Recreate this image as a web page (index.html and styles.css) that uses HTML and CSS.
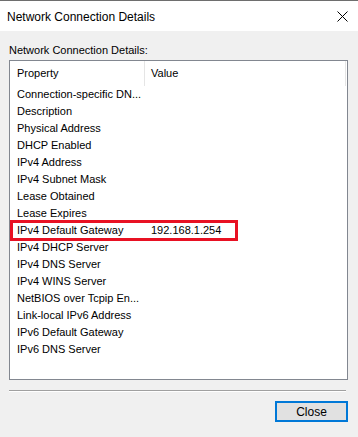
FILE: index.html
```html
<!DOCTYPE html>
<html lang="en">
<head>
    <meta charset="UTF-8">
    <title>Network Connection Details</title>
    <link rel="stylesheet" href="styles.css">
</head>
<body>
    <div class="dialog">
        <div class="titlebar">
            <span class="title">Network Connection Details</span>
            <svg class="close-x" width="11" height="11" viewBox="0 0 11 11">
                <path d="M0.5 0.5 L10.5 10.5 M10.5 0.5 L0.5 10.5" stroke="#000" stroke-width="1" fill="none"/>
            </svg>
        </div>

        <div class="content">
            <div class="label">Network Connection Details:</div>
            <div class="listbox">
                <div class="list-header">
                    <div class="col-prop">Property</div>
                    <div class="col-val">Value</div>
                </div>
                <div class="row"><span class="prop">Connection-specific DN...</span><span class="val"></span></div>
                <div class="row"><span class="prop">Description</span><span class="val"></span></div>
                <div class="row"><span class="prop">Physical Address</span><span class="val"></span></div>
                <div class="row"><span class="prop">DHCP Enabled</span><span class="val"></span></div>
                <div class="row"><span class="prop">IPv4 Address</span><span class="val"></span></div>
                <div class="row"><span class="prop">IPv4 Subnet Mask</span><span class="val"></span></div>
                <div class="row"><span class="prop">Lease Obtained</span><span class="val"></span></div>
                <div class="row"><span class="prop">Lease Expires</span><span class="val"></span></div>
                <div class="row highlight"><span class="prop">IPv4 Default Gateway</span><span class="val">192.168.1.254</span></div>
                <div class="row"><span class="prop">IPv4 DHCP Server</span><span class="val"></span></div>
                <div class="row"><span class="prop">IPv4 DNS Server</span><span class="val"></span></div>
                <div class="row"><span class="prop">IPv4 WINS Server</span><span class="val"></span></div>
                <div class="row"><span class="prop">NetBIOS over Tcpip En...</span><span class="val"></span></div>
                <div class="row"><span class="prop">Link-local IPv6 Address</span><span class="val"></span></div>
                <div class="row"><span class="prop">IPv6 Default Gateway</span><span class="val"></span></div>
                <div class="row"><span class="prop">IPv6 DNS Server</span><span class="val"></span></div>
            </div>
            <div class="separator"></div>
            <div class="buttons">
                <button class="btn">Close</button>
            </div>
        </div>
    </div>
</body>
</html>
```

FILE: styles.css
```css
html, body {
    margin: 0;
    padding: 0;
    background: #f0f0f0;
}
body {
    font-family: "Liberation Sans", Arial, sans-serif;
    font-size: 11px;
    color: #000;
}
.dialog {
    width: 358px;
    height: 437px;
    border-top: 1px solid #6e6e6e;
    box-sizing: border-box;
    background: #f0f0f0;
}
.titlebar {
    height: 30px;
    background: #fff;
    display: flex;
    align-items: center;
    justify-content: space-between;
    padding: 0 10px 0 7px;
}
.title {
    font-size: 12px;
    padding-top: 1px;
}
.content {
    padding: 11px 10px 0 9px;
}
.label {
    height: 18px;
    line-height: 16px;
}
.listbox {
    height: 320px;
    border: 1px solid #828790;
    background: #fff;
    box-sizing: border-box;
    width: 339px;
}
.list-header {
    display: flex;
    height: 25px;
    margin-right: 1px;
}
.col-prop {
    width: 127px;
    padding-left: 7px;
    line-height: 24px;
    border-right: 1px solid #e5e5e5;
}
.col-val {
    flex: 1;
    padding-left: 6px;
    line-height: 24px;
    border-right: 1px solid #e5e5e5;
}
.row {
    display: flex;
    height: 17px;
    line-height: 17px;
}
.prop {
    width: 134px;
    padding-left: 7px;
    white-space: nowrap;
}
.val {
    white-space: nowrap;
}
.highlight {
    outline: 3px solid #e81123;
    outline-offset: -1px;
    width: 224px;
    margin-left: 2px;
}
.highlight .prop {
    width: 134px;
    padding-left: 5px;
}
.separator {
    margin-top: 10px;
    height: 1px;
    background: #a0a0a0;
    border-bottom: 1px solid #fff;
    width: 337px;
}
.buttons {
    display: flex;
    justify-content: flex-end;
    margin-top: 9px;
}
.btn {
    width: 73px;
    height: 21px;
    border: 2px solid #0078d7;
    background: #e1e1e1;
    font-family: "Liberation Sans", Arial, sans-serif;
    font-size: 12px;
    padding: 0;
    color: #000;
}
```
